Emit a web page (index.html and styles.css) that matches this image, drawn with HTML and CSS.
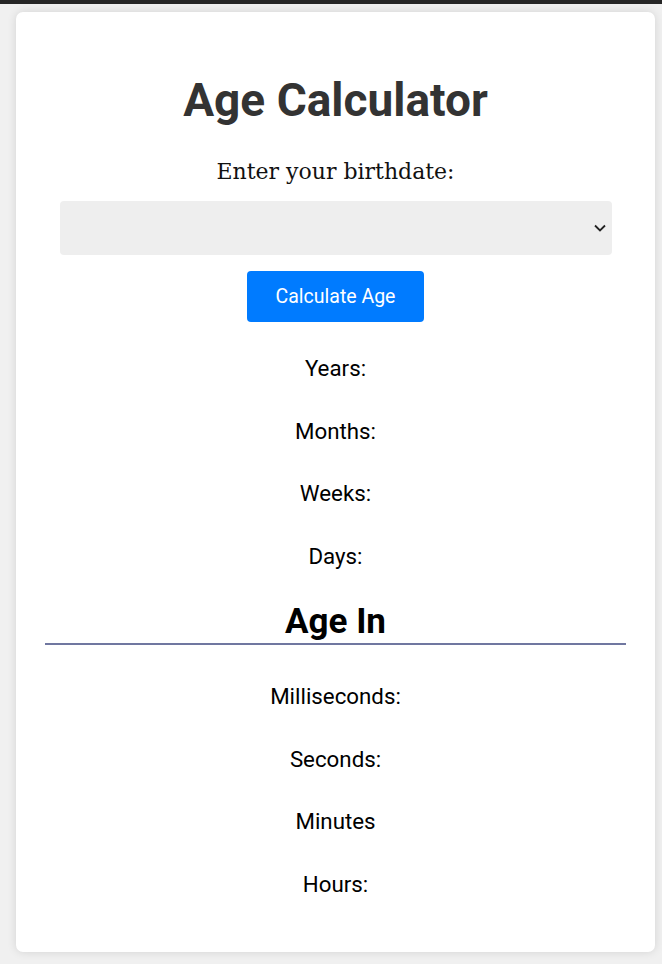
FILE: index.html
```html
<!DOCTYPE html>
<html>
<head>
<meta charset="utf-8">
<link rel="stylesheet" href="styles.css">
</head>
<body>
<div class="topbar"></div>
<div class="page">
  <div class="card">
    <h1 class="title">Age Calculator</h1>
    <label class="label">Enter your birthdate:</label>
    <div class="input">
      <svg class="chev" width="14" height="10" viewBox="0 0 14 10"><path d="M2 2.5 L7 7.5 L12 2.5" fill="none" stroke="#222" stroke-width="1.8"/></svg>
    </div>
    <button class="btn">Calculate Age</button>
    <p class="row">Years:</p>
    <p class="row">Months:</p>
    <p class="row">Weeks:</p>
    <p class="row">Days:</p>
    <h2 class="sub">Age In</h2>
    <div class="rule"></div>
    <p class="row first">Milliseconds:</p>
    <p class="row">Seconds:</p>
    <p class="row">Minutes</p>
    <p class="row">Hours:</p>
  </div>
</div>
</body>
</html>
```
FILE: styles.css
```css
html, body { margin: 0; padding: 0; }
body { background: #f0f0f0; font-family: Roboto, "Liberation Sans", sans-serif; height: 964px; overflow: hidden; }
.topbar { height: 4px; background: #262626; }
.page { padding: 8px 7px 0 16px; }
.card {
  background: #fff;
  border-radius: 7px;
  box-shadow: 0 0 10px rgba(0,0,0,0.12);
  padding: 62px 29px 55px;
  display: flex;
  flex-direction: column;
  align-items: center;
  width: 581px;
}
.title { margin: 0; font-size: 46px; line-height: 52px; font-weight: 700; color: #333; }
.label { margin-top: 33px; font-family: "DejaVu Serif", "Liberation Serif", serif; font-size: 22px; line-height: 26px; color: #111; }
.input {
  margin-top: 16px;
  width: 552px; height: 54px;
  background: #eee; border-radius: 4px;
  display: flex; align-items: center; justify-content: flex-end;
  box-sizing: border-box; padding-right: 5px;
}
.btn {
  margin-top: 16px;
  width: 177px; height: 51px;
  background: #007bff; color: #fff; border: none; border-radius: 4px;
  font-family: Roboto, sans-serif; font-size: 19.5px;
}
.row { margin: 33px 0 0; font-size: 22.3px; line-height: 26px; color: #000; }
.row + .row { margin-top: 36.67px; }
.sub { margin: 34px 0 0; font-size: 35px; line-height: 38px; font-weight: 700; color: #000; }
.rule { margin-top: 2px; width: 581px; height: 2px; background: #7077a0; }
.row.first { margin-top: 38px; }
```
